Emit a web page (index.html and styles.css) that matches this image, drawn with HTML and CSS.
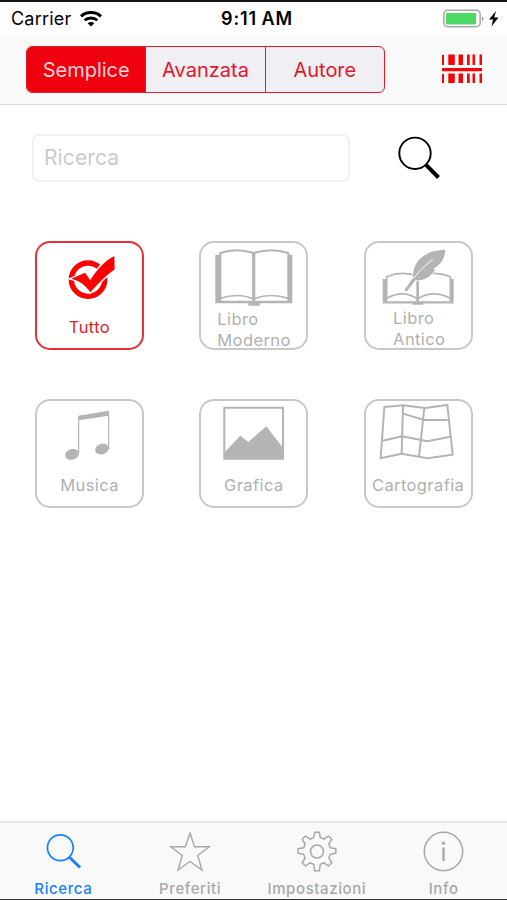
FILE: index.html
```
<!DOCTYPE html>
<html lang="it">
<head>
    <meta charset="UTF-8">
    <meta name="viewport" content="width=device-width, initial-scale=1.0">
    <title>Ricerca</title>
    <link rel="stylesheet" href="styles.css">
</head>
<body>
    <div class="app">
        <!-- Status bar -->
        <div class="status-bar">
            <div class="status-left">
                <span class="carrier">Carrier</span>
                <svg class="wifi" viewBox="0 0 22 16" width="22" height="16">
                    <path d="M1 5.300C6.500 .3 15.500 .3 21 5.300" fill="none" stroke="#000" stroke-width="3"/>
                    <path d="M4.600 9.300C8.300 6.200 13.700 6.200 17.400 9.300" fill="none" stroke="#000" stroke-width="2.800"/>
                    <path d="M7.600 12.200C9.600 10.600 12.400 10.600 14.400 12.200L11 15.600Z"/>
                </svg>
            </div>
            <span class="time">9:11 AM</span>
            <div class="status-right">
                <svg viewBox="0 0 57 20" width="57" height="20">
                    <rect x=".8" y="1.300" width="36.400" height="16.400" rx="4" fill="#fff" stroke="#a5a5a5" stroke-width="1.500"/>
                    <rect x="3" y="4" width="30" height="11.500" rx="1" fill="#4cd964"/>
                    <path d="M39 7.500C41 8 41 11.500 39 12Z" fill="#999"/>
                    <path d="M53 2L46 10.500H50L48.500 17.500L55.500 8.500H51.200Z"/>
                </svg>
            </div>
        </div>

        <!-- Search mode -->
        <div class="nav-bar">
            <div class="segments">
                <button class="segment active">Semplice</button>
                <button class="segment">Avanzata</button>
                <button class="segment">Autore</button>
            </div>
            <svg class="barcode" viewBox="0 0 40 30" width="40" height="30">
                <g fill="#f50505">
                    <path d="M0 1h2v10H0zM6.300 .5h6.500V11H6.300zM16.500 .5h4.500V11h-4.500zM25 .5h2.700V11H25zM30.500 .5h2.500V11h-2.500zM37.500 .5h2.500V11h-2.500z"/>
                    <path d="M0 14h40v3.200H0z"/>
                    <path d="M0 20h2v9H0zM6.300 19.500h6.500V29H6.300zM16.500 19.500h4.500V29h-4.500zM25 19.500h2.700V29H25zM30.500 19.500h2.500V29h-2.500zM37.500 19.500h2.500V29h-2.500z"/>
                </g>
            </svg>
        </div>

        <!-- Search field -->
        <div class="search-row">
            <input class="search-input" type="text" placeholder="Ricerca" aria-label="Ricerca">
            <svg class="search-icon" viewBox="0 0 44 44" width="44" height="44">
                <circle cx="18" cy="17.300" r="15.700" fill="none" stroke="#000" stroke-width="1.900"/>
                <path d="M28.800 28.700L41.500 41.500" stroke="#000" stroke-width="4"/>
            </svg>
        </div>

        <!-- Categories -->
        <div class="categories">
            <button class="card selected">
                <svg viewBox="36 39 315 210">
                    <circle cx="189" cy="149" r="50" fill="none" stroke="#f00" stroke-width="16"/>
                    <path d="M139 146L180 128L196 151C213 121 240 92 268 78L269 118C244 136 222 158 196 187C183 167 164 152 139 146Z" fill="#f00" stroke="#fff" stroke-width="8" paint-order="stroke"/>
                </svg>
                <span class="label">Tutto</span>
            </button>
            <button class="card">
                <svg viewBox="33 39 315 210">
                    <path d="M76 74H91V213H76ZM294 74H307V213H294ZM175 217H209V227H175Z" fill="#b4b4b4"/>
                    <g fill="none" stroke="#b4b4b4" stroke-width="6">
                        <path d="M91 213V69Q140 52 191 69Q245 52 295 69V213"/>
                        <path d="M91 205Q145 187 191 207Q240 187 295 205" stroke-width="5"/>
                    </g>
                    <path d="M76 216H307" stroke="#b4b4b4" stroke-width="7"/>
                    <path d="M191 68V214" stroke="#b4b4b4" stroke-width="10"/>
                </svg>
                <span class="label book">Libro Moderno</span>
            </button>
            <button class="card">
                <svg viewBox="36 39 315 210">
                    <path d="M86 147H98V215H86ZM289 147H299V215H289ZM176 215H208V224H176Z" fill="#b4b4b4"/>
                    <g fill="none" stroke="#b4b4b4" stroke-width="5">
                        <path d="M98 213V140Q143 121 191 138Q243 121 289 140V213"/>
                        <path d="M98 205Q147 177 191 207Q235 177 289 205"/>
                    </g>
                    <path d="M86 217H299" stroke="#b4b4b4" stroke-width="7"/>
                    <path d="M191 138V214" stroke="#b4b4b4" stroke-width="8"/>
                    <path d="M151 181L177 143C175 90 219 59 274 59C273 85 262 103 237 117L244 119C229 141 209 153 184 151L158 185Z" fill="#b4b4b4" stroke="#fff" stroke-width="5" paint-order="stroke"/>
                    <path d="M177 147Q202 112 238 87" fill="none" stroke="#fff" stroke-width="3"/>
                </svg>
                <span class="label book antico">Libro Antico</span>
            </button>
            <button class="card">
                <svg viewBox="36 33 315 210">
                    <path d="M160 77L252 62V77L160 91Z" fill="#b4b4b4"/>
                    <path d="M161 80V190M251 68V177" stroke="#b4b4b4" stroke-width="3.500"/>
                    <ellipse cx="141" cy="193" rx="21" ry="16" transform="rotate(-18 141 193)" fill="#b4b4b4"/>
                    <ellipse cx="231" cy="177" rx="21" ry="16" transform="rotate(-18 231 177)" fill="#b4b4b4"/>
                </svg>
                <span class="label">Musica</span>
            </button>
            <button class="card">
                <svg viewBox="33 33 315 210">
                    <path d="M103 53H279V206H103Z" fill="none" stroke="#b4b4b4" stroke-width="6"/>
                    <path d="M102 189L151 137L175 156L229 109L279 174V207H102Z" fill="#b4b4b4"/>
                </svg>
                <span class="label">Grafica</span>
            </button>
            <button class="card">
                <svg viewBox="36 33 315 210">
                    <g fill="none" stroke="#b4b4b4" stroke-width="6">
                        <path d="M91 51L147 46L213 54L280 45L296 194L221 205L142 191L80 205Z"/>
                        <path d="M147 46L143 191M211 54L195 200M147 71L210 90L281 90M86 152L144 139L220 154L289 140"/>
                    </g>
                </svg>
                <span class="label">Cartografia</span>
            </button>
        </div>

        <!-- Tab bar -->
        <div class="tab-bar">
            <div class="tab active">
                <svg viewBox="0 0 42 42" width="42" height="42">
                    <circle cx="18.300" cy="17.700" r="12.900" fill="none" stroke="currentColor" stroke-width="1.700"/>
                    <path d="M27.500 27.200L38 37.500" stroke="currentColor" stroke-width="3"/>
                </svg>
                <span>Ricerca</span>
            </div>
            <div class="tab">
                <svg viewBox="0 0 42 42" width="42" height="42">
                    <path d="M21 3L25.600 16.700H40.200L28.700 25.500L33 40L21 31.500L9 40L13.300 25.500L1.800 16.700H16.400Z" fill="none" stroke="currentColor" stroke-width="1.400"/>
                </svg>
                <span>Preferiti</span>
            </div>
            <div class="tab">
                <svg viewBox="0 0 42 42" width="42" height="42">
                    <g fill="none" stroke="currentColor" stroke-width="1.500" stroke-linejoin="round">
                        <path d="M18.700 2.200H23.300L24.300 7.600L28 9.200L32.500 6L35.900 9.400L32.800 14L34.400 17.700L39.900 18.700V23.300L34.400 24.300L32.800 28L35.900 32.600L32.500 36L28 32.800L24.300 34.400L23.300 40.800H18.700L17.700 34.400L14 32.800L9.500 36L6.100 32.600L9.200 28L7.600 24.300L2.100 23.300V18.700L7.600 17.700L9.200 14L6.100 9.400L9.500 6L14 9.200L17.700 7.600Z"/>
                        <circle cx="21" cy="21.500" r="6.500"/>
                    </g>
                </svg>
                <span>Impostazioni</span>
            </div>
            <div class="tab">
                <svg viewBox="0 0 42 42" width="42" height="42">
                    <circle cx="20.500" cy="21.500" r="19.200" fill="none" stroke="currentColor" stroke-width="1.500"/>
                    <circle cx="20.500" cy="13.200" r="1.700" fill="currentColor"/>
                    <path d="M20.500 17.500V31" stroke="currentColor" stroke-width="2.400"/>
                </svg>
                <span>Info</span>
            </div>
        </div>
    </div>
</body>
</html>
```

FILE: styles.css
```
* {
    box-sizing: border-box;
}
body {
    font-family: Inter, "Liberation Sans", sans-serif;
    margin: 0;
    background-color: #fff;
}
button {
    font-family: inherit;
    padding: 0;
    cursor: pointer;
}
svg {
    display: block;
    flex: none;
}
.app {
    height: 900px;
    display: flex;
    flex-direction: column;
    border-top: 2px solid #151515;
    border-bottom: 1px solid #333;
    overflow: hidden;
}

/* Status bar */
.status-bar {
    height: 33px;
    display: grid;
    grid-template-columns: 1fr auto 1fr;
    align-items: center;
    padding: 0 7px 0 11px;
    font-size: 18px;
}
.status-left {
    display: flex;
    align-items: center;
    gap: 9px;
}
.carrier {
    letter-spacing: 0.2px;
}
.time {
    padding-left: 3px;
    font-weight: 600;
    letter-spacing: 0.9px;
    word-spacing: -1px;
}
.status-right {
    display: flex;
    justify-content: flex-end;
}

/* Top bar */
.nav-bar {
    height: 70px;
    display: flex;
    justify-content: space-between;
    padding: 11px 25px 0 26px;
    background: #f9f9f9;
    border-bottom: 1px solid #dedede;
}
.segments {
    width: 359px;
    height: 47px;
    display: flex;
    border: 1.5px solid #dc1e2d;
    border-radius: 6px;
    background: #efeff4;
    overflow: hidden;
}
.segment {
    flex: 1;
    border: none;
    border-left: 1.5px solid #dc1e2d;
    background: none;
    color: #e0182a;
    font-size: 20px;
}
.segment:first-child {
    border-left: none;
}
.segment.active {
    background: #ef000e;
    color: #ffd5d8;
}
.barcode {
    margin-top: 8px;
}

/* Search field */
.search-row {
    height: 77px;
    display: flex;
    align-items: flex-start;
    gap: 47px;
    padding: 29px 0 0 32px;
}
.search-input {
    width: 318px;
    height: 48px;
    padding: 0 10px 1px;
    border: 2px solid #f1f1f1;
    border-radius: 7px;
    font-family: inherit;
    font-size: 21px;
    letter-spacing: 0.1px;
    outline: none;
}
.search-input::placeholder {
    color: #cbcbcb;
}
.search-icon {
    margin-top: 2px;
}

/* Categories */
.categories {
    flex: 1;
    display: grid;
    grid-template-columns: repeat(3, 109px);
    grid-auto-rows: 109px;
    column-gap: 55.3px;
    row-gap: 49px;
    padding: 59px 0 0 35px;
}
.card {
    display: flex;
    flex-direction: column;
    align-items: center;
    border: 2px solid #c8c8c8;
    border-radius: 15px;
    background: #fff;
    color: #b0b0b0;
}
.card svg {
    width: 105px;
    height: 70px;
}
.label {
    margin-top: 4px;
    font-size: 16.5px;
    line-height: 20.5px;
    letter-spacing: 0.4px;
}
.label.book {
    width: 73px;
    margin-top: -4px;
    text-align: left;
}
.label.antico {
    width: 50px;
    margin-top: -5px;
}
.card.selected {
    border-color: #e43038;
    color: #e5202a;
}

/* Tab bar */
.tab-bar {
    height: 78px;
    display: flex;
    background: #f9f9f9;
    border-top: 2px solid #e9e9e9;
}
.tab {
    flex: 1;
    display: flex;
    flex-direction: column;
    align-items: center;
    padding-top: 7px;
    gap: 7px;
    color: #a8a8a8;
    font-size: 15px;
    font-weight: 500;
    line-height: 20px;
    letter-spacing: 0.6px;
}
.tab.active {
    color: #1683fb;
}
```
